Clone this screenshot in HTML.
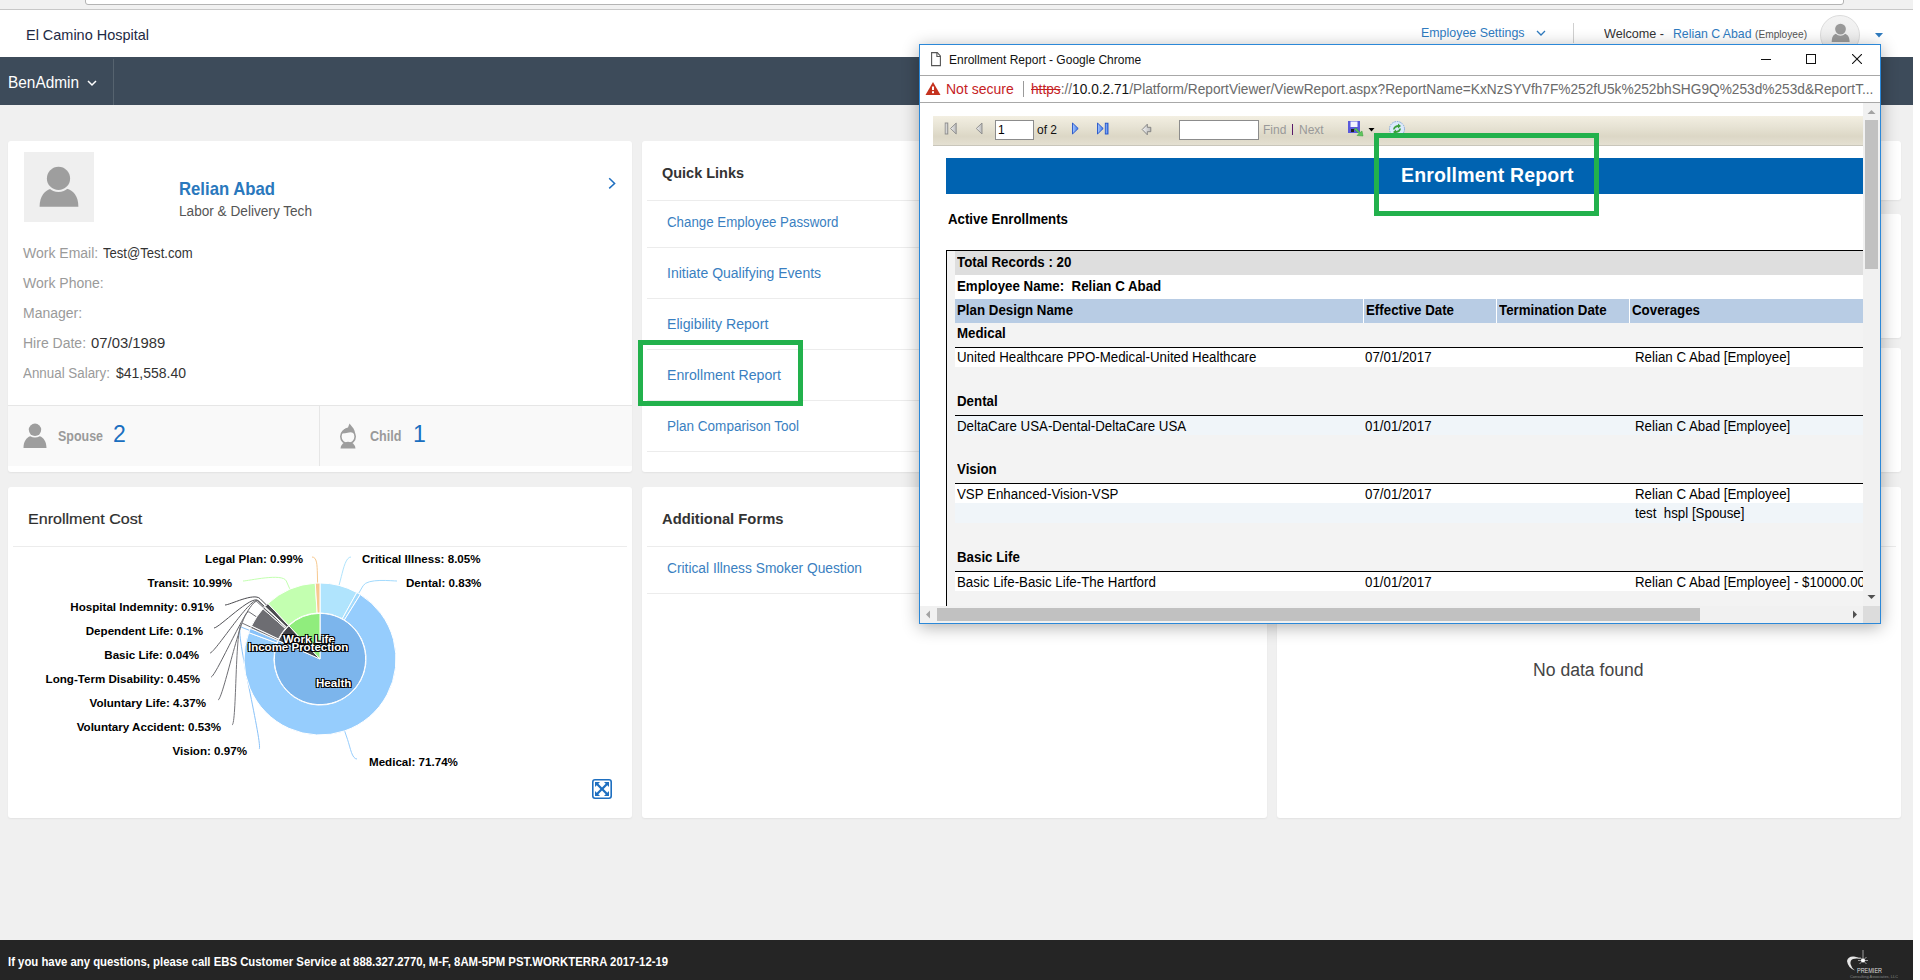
<!DOCTYPE html>
<html><head><meta charset="utf-8">
<style>
*{margin:0;padding:0;box-sizing:border-box}
html,body{width:1920px;height:980px;overflow:hidden;background:#fff;font-family:"Liberation Sans",sans-serif}
.a{position:absolute}
.t{position:absolute;white-space:nowrap;line-height:1}
</style></head><body>
<div class="a" style="left:0px;top:0px;width:1913px;height:980px;background:#f0f0f0;"></div>
<div class="a" style="left:0px;top:0px;width:1913px;height:9px;background:#f1f1f1;"></div>
<div class="a" style="left:85px;top:-10px;width:1759px;height:15px;background:#fff;border:1px solid #b4b4b4;border-radius:3px;"></div>
<div class="a" style="left:0px;top:9px;width:1913px;height:1px;background:#c8c8c8;"></div>
<div class="a" style="left:0px;top:10px;width:1913px;height:47px;background:#fff;"></div>
<div class="t" style="left:26px;top:27.25px;font-size:15px;color:#1e2a44;transform:scaleX(0.964);transform-origin:0 0;">El Camino Hospital</div>
<div class="t" style="left:1421px;top:25.95px;font-size:13px;color:#2f7bbf;transform:scaleX(0.955);transform-origin:0 0;">Employee Settings</div>
<svg class="a" style="left:1536px;top:30px;" width="10" height="7" viewBox="0 0 10 7"><path d="M1 1L5 5L9 1" fill="none" stroke="#2f7bbf" stroke-width="1.3"/></svg>
<div class="a" style="left:1573px;top:23px;width:1px;height:20px;background:#d0d0d0;"></div>
<div class="t" style="left:1604px;top:26.95px;font-size:13px;color:#333;transform:scaleX(0.97);transform-origin:0 0;">Welcome -</div>
<div class="t" style="left:1673px;top:26.95px;font-size:13px;color:#2f7bbf;transform:scaleX(0.945);transform-origin:0 0;">Relian C Abad</div>
<div class="t" style="left:1755px;top:28.65px;font-size:11px;color:#555;transform:scaleX(0.925);transform-origin:0 0;">(Employee)</div>
<div class="a" style="left:1820px;top:15px;width:40px;height:40px;border-radius:50%;background:linear-gradient(#f3f3f3,#ebebeb);border:1px solid #dcdcdc;overflow:hidden"><svg width="40" height="40" viewBox="0 0 40 40" style="position:absolute;left:-1px;top:-1px"><path d="M11.7 27C11.7 22 13.5 19.5 16 18.8H25C27.5 19.5 29.6 22 29.6 27z" fill="#999"/><circle cx="20.5" cy="14.1" r="6.6" fill="#efefef"/><circle cx="20.5" cy="14.1" r="5.4" fill="#999"/></svg></div>
<svg class="a" style="left:1874px;top:32px;" width="10" height="6" viewBox="0 0 10 6"><path d="M1 1L9 1L5 5.5z" fill="#2f7bbf"/></svg>
<div class="a" style="left:0px;top:57px;width:1913px;height:48px;background:#3d4b5a;"></div>
<div class="t" style="left:8px;top:74.90px;font-size:16px;color:#fff;transform:scaleX(0.962);transform-origin:0 0;">BenAdmin</div>
<svg class="a" style="left:87px;top:80px;" width="10" height="7" viewBox="0 0 10 7"><path d="M1 1L5 5L9 1" fill="none" stroke="#fff" stroke-width="1.5"/></svg>
<div class="a" style="left:113px;top:59px;width:1px;height:46px;background:#56636f;"></div>
<div class="a" style="left:8px;top:141px;width:624px;height:331px;background:#fff;border-radius:3px;box-shadow:0 1px 2px rgba(0,0,0,.06);"></div>
<div class="a" style="left:642px;top:141px;width:625px;height:331px;background:#fff;border-radius:3px;box-shadow:0 1px 2px rgba(0,0,0,.06);"></div>
<div class="a" style="left:1277px;top:141px;width:624px;height:59px;background:#fff;border-radius:3px;box-shadow:0 1px 2px rgba(0,0,0,.06);"></div>
<div class="a" style="left:1277px;top:214px;width:624px;height:124px;background:#fff;border-radius:3px;box-shadow:0 1px 2px rgba(0,0,0,.06);"></div>
<div class="a" style="left:1277px;top:348px;width:624px;height:124px;background:#fff;border-radius:3px;box-shadow:0 1px 2px rgba(0,0,0,.06);"></div>
<div class="a" style="left:8px;top:487px;width:624px;height:331px;background:#fff;border-radius:3px;box-shadow:0 1px 2px rgba(0,0,0,.06);"></div>
<div class="a" style="left:642px;top:487px;width:625px;height:331px;background:#fff;border-radius:3px;box-shadow:0 1px 2px rgba(0,0,0,.06);"></div>
<div class="a" style="left:1277px;top:487px;width:624px;height:331px;background:#fff;border-radius:3px;box-shadow:0 1px 2px rgba(0,0,0,.06);"></div>
<div class="a" style="left:0px;top:940px;width:1913px;height:40px;background:#252525;"></div>
<div class="t" style="left:8px;top:955.80px;font-size:12px;font-weight:bold;color:#fff;transform:scaleX(0.946);transform-origin:0 0;">If you have any questions, please call EBS Customer Service at 888.327.2770, M-F, 8AM-5PM PST.WORKTERRA 2017-12-19</div>
<svg class="a" style="left:1844px;top:947px;" width="54" height="33" viewBox="0 0 54 33"><path d="M3 14Q4 9 10 9.5Q14 10 19 12.5Q13 11 9 12Q6 13 6.5 17Q7.5 21 11 23.5Q4 21 3 14z" fill="#e6e6e6"/><path d="M19 3V14M14 13.5H24M15.5 10L22.5 17M22.5 10L15.5 17" stroke="#bbb" stroke-width="0.8"/><circle cx="19" cy="13.5" r="2" fill="#fff"/><text x="13" y="26" font-family="Liberation Sans" font-size="8" fill="#ddd" textLength="25" lengthAdjust="spacingAndGlyphs">PREMIER</text><text x="6" y="31" font-family="Liberation Sans" font-size="4" fill="#888" textLength="48" lengthAdjust="spacingAndGlyphs">Consulting Associates, LLC</text></svg>
<div class="a" style="left:24px;top:152px;width:70px;height:70px;background:#efefef;"></div>
<svg class="a" style="left:24px;top:152px;" width="70" height="70" viewBox="0 0 70 70"><path d="M15.6 54.8C15.6 44 21 38.5 27 36.8H43C49 38.5 54.4 44 54.4 54.8z" fill="#9e9e9e"/><circle cx="34.5" cy="26.4" r="13.6" fill="#efefef"/><circle cx="34.5" cy="26.4" r="11.6" fill="#9e9e9e"/></svg>
<div class="t" style="left:179px;top:178.85px;font-size:19px;font-weight:bold;color:#2a78bd;transform:scaleX(0.88);transform-origin:0 0;">Relian Abad</div>
<div class="t" style="left:179px;top:204.10px;font-size:14px;color:#555;transform:scaleX(0.973);transform-origin:0 0;">Labor &amp; Delivery Tech</div>
<svg class="a" style="left:606px;top:176px;" width="12" height="15" viewBox="0 0 12 15"><path d="M3.2 2.3L8.6 7.5L3.2 12.4" fill="none" stroke="#1e6fc0" stroke-width="1.5"/></svg>
<div class="t" style="left:23px;top:246.10px;font-size:14px;color:#9a9a9a;">Work Email:</div>
<div class="t" style="left:103px;top:246.10px;font-size:14px;color:#333;transform:scaleX(0.935);transform-origin:0 0;">Test@Test.com</div>
<div class="t" style="left:23px;top:276.10px;font-size:14px;color:#9a9a9a;">Work Phone:</div>
<div class="t" style="left:23px;top:306.10px;font-size:14px;color:#9a9a9a;">Manager:</div>
<div class="t" style="left:23px;top:336.10px;font-size:14px;color:#9a9a9a;">Hire Date:</div>
<div class="t" style="left:91px;top:336.10px;font-size:14px;color:#333;transform:scaleX(1.06);transform-origin:0 0;">07/03/1989</div>
<div class="t" style="left:23px;top:366.10px;font-size:14px;color:#9a9a9a;transform:scaleX(0.955);transform-origin:0 0;">Annual Salary:</div>
<div class="t" style="left:116px;top:366.10px;font-size:14px;color:#333;">$41,558.40</div>
<div class="a" style="left:8px;top:405px;width:624px;height:1px;background:#e6e6e6;"></div>
<div class="a" style="left:8px;top:406px;width:624px;height:60px;background:#f9f9f9;"></div>
<div class="a" style="left:319px;top:406px;width:1px;height:60px;background:#e6e6e6;"></div>
<svg class="a" style="left:22px;top:422px;" width="28" height="28" viewBox="0 0 28 28"><circle cx="13" cy="7.8" r="6.2" fill="#9e9e9e"/><path d="M1.5 26C1.5 19.5 4.5 15.6 8.2 14.3Q13 16.8 17.8 14.3C21.5 15.6 24.5 19.5 24.5 26z" fill="#9e9e9e"/></svg>
<div class="t" style="left:58px;top:429.10px;font-size:14px;font-weight:bold;color:#9a9a9a;transform:scaleX(0.89);transform-origin:0 0;">Spouse</div>
<div class="t" style="left:113px;top:423.45px;font-size:23px;color:#1a6fc0;">2</div>
<svg class="a" style="left:337px;top:422px;" width="22" height="28" viewBox="0 0 22 28"><circle cx="11" cy="14.5" r="7.2" fill="none" stroke="#9e9e9e" stroke-width="1.6"/><path d="M4.5 11.5Q6 6.5 11 5.5L12.5 1.5L16.5 6.5Q18 8.5 17.8 12Q15 9.5 12 10.5Q8 11.5 4.5 11.5z" fill="#9e9e9e"/><path d="M3.5 26.5Q4.5 20 11 19.8Q17.5 20 18.5 26.5z" fill="#9e9e9e"/></svg>
<div class="t" style="left:370px;top:429.10px;font-size:14px;font-weight:bold;color:#9a9a9a;transform:scaleX(0.9);transform-origin:0 0;">Child</div>
<div class="t" style="left:413px;top:423.45px;font-size:23px;color:#1a6fc0;">1</div>
<div class="t" style="left:662px;top:165.25px;font-size:15px;font-weight:bold;color:#333;transform:scaleX(0.965);transform-origin:0 0;">Quick Links</div>
<div class="a" style="left:647px;top:200px;width:615px;height:1px;background:#ececec;"></div>
<div class="a" style="left:647px;top:247px;width:615px;height:1px;background:#ececec;"></div>
<div class="a" style="left:647px;top:298px;width:615px;height:1px;background:#ececec;"></div>
<div class="a" style="left:647px;top:349px;width:615px;height:1px;background:#ececec;"></div>
<div class="a" style="left:647px;top:400px;width:615px;height:1px;background:#ececec;"></div>
<div class="a" style="left:647px;top:451px;width:615px;height:1px;background:#ececec;"></div>
<div class="t" style="left:667px;top:214.90px;font-size:14px;color:#3a7fc1;transform:scaleX(0.95);transform-origin:0 0;">Change Employee Password</div>
<div class="t" style="left:667px;top:265.90px;font-size:14px;color:#3a7fc1;">Initiate Qualifying Events</div>
<div class="t" style="left:667px;top:316.90px;font-size:14px;color:#3a7fc1;transform:scaleX(1.01);transform-origin:0 0;">Eligibility Report</div>
<div class="t" style="left:667px;top:367.90px;font-size:14px;color:#3a7fc1;transform:scaleX(1.01);transform-origin:0 0;">Enrollment Report</div>
<div class="t" style="left:667px;top:418.90px;font-size:14px;color:#3a7fc1;transform:scaleX(0.966);transform-origin:0 0;">Plan Comparison Tool</div>
<div class="t" style="left:28px;top:511.25px;font-size:15px;color:#2e2e2e;-webkit-text-stroke:0.2px #2e2e2e;transform:scaleX(1.07);transform-origin:0 0;">Enrollment Cost</div>
<div class="a" style="left:13px;top:546px;width:614px;height:1px;background:#ececec;"></div>
<svg class="a" style="left:591px;top:778px;" width="22" height="22" viewBox="0 0 22 22"><rect x="1.8" y="1.8" width="18.4" height="18.4" rx="2.2" fill="none" stroke="#1e6fc0" stroke-width="1.6"/><path d="M4 4H9L7.3 5.7L11 9.4L14.7 5.7L13 4H18V9L16.3 7.3L12.6 11L16.3 14.7L18 13V18H13L14.7 16.3L11 12.6L7.3 16.3L9 18H4V13L5.7 14.7L9.4 11L5.7 7.3L4 9z" fill="#1e6fc0"/></svg>
<div class="t" style="left:662px;top:511.25px;font-size:15px;font-weight:bold;color:#333;transform:scaleX(0.985);transform-origin:0 0;">Additional Forms</div>
<div class="a" style="left:647px;top:546px;width:615px;height:1px;background:#ececec;"></div>
<div class="t" style="left:667px;top:561.10px;font-size:14px;color:#3a7fc1;transform:scaleX(0.983);transform-origin:0 0;">Critical Illness Smoker Question</div>
<div class="a" style="left:647px;top:593px;width:615px;height:1px;background:#ececec;"></div>
<div class="a" style="left:1282px;top:546px;width:614px;height:1px;background:#ececec;"></div>
<div class="t" style="left:1533px;top:660.70px;font-size:18px;color:#444;transform:scaleX(0.978);transform-origin:0 0;">No data found</div>
<div class="a" style="left:638px;top:340px;width:165px;height:66px;background:transparent;border:5px solid #22b14c;"></div>
<svg class="a" style="left:0;top:0" width="640" height="830" viewBox="0 0 640 830"><path d="M312.0 557.0C317.0 557.0 317.1 565.0 317.4 574.0L317.6 583.0" fill="none" stroke="#f7c98f" stroke-width="1"/><path d="M243.0 581.0C248.0 581.0 282.7 572.7 286.3 581.0L289.9 589.2" fill="none" stroke="#c3ffb0" stroke-width="1"/><path d="M351.0 557.0C346.0 557.0 343.5 568.0 341.3 576.7L339.0 585.4" fill="none" stroke="#b0e4fd" stroke-width="1"/><path d="M397.0 581.0C392.0 581.0 367.7 578.0 363.1 585.7L358.6 593.5" fill="none" stroke="#a2dafd" stroke-width="1"/><path d="M357.0 759.0C352.0 759.0 350.4 748.0 347.5 739.4L344.6 730.9" fill="none" stroke="#96cdfd" stroke-width="1"/><path d="M259.0 749.0C264.0 749.0 232.9 623.7 241.2 627.1L249.6 630.4" fill="none" stroke="#89c2f9" stroke-width="1"/><path d="M225.0 605.0C230.0 605.0 253.8 592.3 260.1 598.7L266.5 605.1" fill="none" stroke="#4b4b50" stroke-width="1"/><path d="M214.0 628.0C219.0 628.0 251.7 594.4 258.2 600.6L264.8 606.8" fill="none" stroke="#545459" stroke-width="1"/><path d="M210.0 653.0C215.0 653.0 251.4 594.7 258.0 600.9L264.6 607.0" fill="none" stroke="#5c5c61" stroke-width="1"/><path d="M211.0 677.0C216.0 677.0 250.4 595.8 257.1 601.8L263.8 607.9" fill="none" stroke="#65656a" stroke-width="1"/><path d="M218.0 700.0C223.0 700.0 241.7 607.0 249.2 612.0L256.7 617.0" fill="none" stroke="#6d6d72" stroke-width="1"/><path d="M232.0 725.0C237.0 725.0 234.6 619.6 242.8 623.4L251.0 627.2" fill="none" stroke="#76767b" stroke-width="1"/><path d="M320.00 583.00A76.0 76.0 0 0 1 356.83 592.52L342.34 618.68A46.1 46.1 0 0 0 320.00 612.90Z" fill="#b0e4fd" stroke="#fff" stroke-width="1" stroke-linejoin="round"/><path d="M356.83 592.52A76.0 76.0 0 0 1 360.25 594.53L344.41 619.90A46.1 46.1 0 0 0 342.34 618.68Z" fill="#a2dafd" stroke="#fff" stroke-width="1" stroke-linejoin="round"/><path d="M360.25 594.53A76.0 76.0 0 1 1 248.73 632.61L276.77 642.99A46.1 46.1 0 1 0 344.41 619.90Z" fill="#96cdfd" stroke="#fff" stroke-width="1" stroke-linejoin="round"/><path d="M248.73 632.61A76.0 76.0 0 0 1 250.47 628.32L277.82 640.39A46.1 46.1 0 0 0 276.77 642.99Z" fill="#89c2f9" stroke="#fff" stroke-width="1" stroke-linejoin="round"/><path d="M250.47 628.32A76.0 76.0 0 0 1 251.53 626.02L278.47 638.99A46.1 46.1 0 0 0 277.82 640.39Z" fill="#76767b" stroke="#fff" stroke-width="1" stroke-linejoin="round"/><path d="M251.53 626.02A76.0 76.0 0 0 1 263.04 608.68L285.45 628.48A46.1 46.1 0 0 0 278.47 638.99Z" fill="#6d6d72" stroke="#fff" stroke-width="1" stroke-linejoin="round"/><path d="M263.04 608.68A76.0 76.0 0 0 1 264.49 607.09L286.33 627.51A46.1 46.1 0 0 0 285.45 628.48Z" fill="#65656a" stroke="#fff" stroke-width="1" stroke-linejoin="round"/><path d="M264.49 607.09A76.0 76.0 0 0 1 264.62 606.95L286.41 627.43A46.1 46.1 0 0 0 286.33 627.51Z" fill="#5c5c61" stroke="#fff" stroke-width="1" stroke-linejoin="round"/><path d="M264.62 606.95A76.0 76.0 0 0 1 264.95 606.61L286.61 627.22A46.1 46.1 0 0 0 286.41 627.43Z" fill="#545459" stroke="#fff" stroke-width="1" stroke-linejoin="round"/><path d="M264.95 606.61A76.0 76.0 0 0 1 268.03 603.54L288.48 625.36A46.1 46.1 0 0 0 286.61 627.22Z" fill="#4b4b50" stroke="#fff" stroke-width="1" stroke-linejoin="round"/><path d="M268.03 603.54A76.0 76.0 0 0 1 315.27 583.15L317.13 612.99A46.1 46.1 0 0 0 288.48 625.36Z" fill="#c3ffb0" stroke="#fff" stroke-width="1" stroke-linejoin="round"/><path d="M315.27 583.15A76.0 76.0 0 0 1 320.00 583.00L320.00 612.90A46.1 46.1 0 0 0 317.13 612.99Z" fill="#f7c98f" stroke="#fff" stroke-width="1" stroke-linejoin="round"/><path d="M320.00 659.00L320.00 613.40A45.6 45.6 0 1 1 278.28 640.59Z" fill="#7cb5ec" stroke="#fff" stroke-width="1" stroke-linejoin="round"/><path d="M320.00 659.00L278.28 640.59A45.6 45.6 0 0 1 288.82 625.73Z" fill="#434348" stroke="#fff" stroke-width="1" stroke-linejoin="round"/><path d="M320.00 659.00L288.82 625.73A45.6 45.6 0 0 1 320.00 613.40Z" fill="#90ed7d" stroke="#fff" stroke-width="1" stroke-linejoin="round"/></svg>
<div class="t" style="right:1617px;top:553.14px;font-size:11.6px;font-weight:bold;color:#000">Legal Plan: 0.99%</div>
<div class="t" style="right:1688px;top:577.14px;font-size:11.6px;font-weight:bold;color:#000">Transit: 10.99%</div>
<div class="t" style="right:1706px;top:601.14px;font-size:11.6px;font-weight:bold;color:#000">Hospital Indemnity: 0.91%</div>
<div class="t" style="right:1717px;top:625.14px;font-size:11.6px;font-weight:bold;color:#000">Dependent Life: 0.1%</div>
<div class="t" style="right:1721px;top:649.14px;font-size:11.6px;font-weight:bold;color:#000">Basic Life: 0.04%</div>
<div class="t" style="right:1720px;top:673.14px;font-size:11.6px;font-weight:bold;color:#000">Long-Term Disability: 0.45%</div>
<div class="t" style="right:1714px;top:697.14px;font-size:11.6px;font-weight:bold;color:#000">Voluntary Life: 4.37%</div>
<div class="t" style="right:1699px;top:721.14px;font-size:11.6px;font-weight:bold;color:#000">Voluntary Accident: 0.53%</div>
<div class="t" style="right:1673px;top:745.14px;font-size:11.6px;font-weight:bold;color:#000">Vision: 0.97%</div>
<div class="t" style="left:362px;top:553.14px;font-size:11.6px;font-weight:bold;color:#000;">Critical Illness: 8.05%</div>
<div class="t" style="left:406px;top:577.14px;font-size:11.6px;font-weight:bold;color:#000;">Dental: 0.83%</div>
<div class="t" style="left:369px;top:756.14px;font-size:11.6px;font-weight:bold;color:#000;">Medical: 71.74%</div>
<div class="t" style="left:283px;top:633.61px;font-size:11.4px;font-weight:bold;color:#fff;text-shadow:0 0 1px #000,0 0 1px #000,1px 1px 0 #000,-1px -1px 0 #000,1px -1px 0 #000,-1px 1px 0 #000;">Work Life</div>
<div class="t" style="left:248px;top:641.52px;font-size:11.5px;font-weight:bold;color:#fff;text-shadow:0 0 1px #000,0 0 1px #000,1px 1px 0 #000,-1px -1px 0 #000,1px -1px 0 #000,-1px 1px 0 #000;">Income Protection</div>
<div class="t" style="left:316px;top:677.14px;font-size:11.6px;font-weight:bold;color:#fff;text-shadow:0 0 1px #000,0 0 1px #000,1px 1px 0 #000,-1px -1px 0 #000,1px -1px 0 #000,-1px 1px 0 #000;">Health</div>
<div class="a" style="left:919px;top:44px;width:962px;height:580px;background:#fff;box-shadow:0 3px 16px rgba(0,0,0,.32);"></div>
<div class="a" style="left:919px;top:44px;width:962px;height:580px;background:#fff;border:1px solid #2b88d8;"></div>
<div class="a" style="left:920px;top:75px;width:960px;height:1px;background:#a8a8a8;"></div>
<svg class="a" style="left:930px;top:51px;" width="12" height="16" viewBox="0 0 12 16"><path d="M1.6 1.6H7.3L10.4 4.9V14.6H1.6z" fill="#fff" stroke="#555" stroke-width="1.1"/><path d="M6.9 1.6V5.5H10.4" fill="none" stroke="#555" stroke-width="1.1"/></svg>
<div class="t" style="left:949px;top:53.80px;font-size:12px;color:#111;">Enrollment Report - Google Chrome</div>
<div class="a" style="left:1761px;top:59px;width:10px;height:1px;background:#111;"></div>
<div class="a" style="left:1806px;top:54px;width:10px;height:10px;background:transparent;border:1px solid #111;"></div>
<svg class="a" style="left:1852px;top:54px;" width="10" height="10" viewBox="0 0 10 10"><path d="M0 0L10 10M10 0L0 10" stroke="#111" stroke-width="1.1"/></svg>
<div class="a" style="left:920px;top:102px;width:960px;height:1px;background:#a8a8a8;"></div>
<svg class="a" style="left:925px;top:82px;" width="16" height="13" viewBox="0 0 16 13"><path d="M8 0L15.5 13H0.5z" fill="#c5321f"/><rect x="7" y="4.5" width="2" height="3.5" fill="#fff"/><rect x="7" y="9.2" width="2" height="2" fill="#fff"/></svg>
<div class="t" style="left:946px;top:82.10px;font-size:14px;color:#c5221f;">Not secure</div>
<div class="a" style="left:1023px;top:81px;width:1px;height:16px;background:#9a9a9a;"></div>
<div class="t" style="left:1031px;top:82.10px;font-size:14px;color:#6a6a6a;transform:scaleX(0.978);transform-origin:0 0;"><span style="color:#c5221f;text-decoration:line-through">https</span>://<span style="color:#111">10.0.2.71</span>/Platform/ReportViewer/ViewReport.aspx?ReportName=KxNzSYVfh7F%252fU5k%252bhSHG9Q%253d%253d&amp;ReportT...</div>
<div class="a" style="left:0;top:0;width:1920px;height:980px;clip-path:inset(103px 57px 374px 920px)">
<div class="a" style="left:933px;top:116px;width:930px;height:30px;background:linear-gradient(#f3efe2 0%,#e6e2d3 40%,#dcd7c6 70%,#e4e0d2 100%);border-bottom:1px solid #c9c6bb;"></div>
<svg class="a" style="left:944px;top:122px;" width="14" height="13" viewBox="0 0 14 13"><defs><linearGradient id="gg" x1="0" x2="1"><stop offset="0" stop-color="#f2f2f2"/><stop offset="1" stop-color="#b9b9b9"/></linearGradient></defs><rect x="1.2" y="1" width="2.6" height="11" fill="url(#gg)" stroke="#8a8a8a" stroke-width="0.9"/><path d="M12.2 1L6.5 6.5L12.2 12z" fill="url(#gg)" stroke="#8a8a8a" stroke-width="0.9"/></svg>
<svg class="a" style="left:974px;top:122px;" width="9" height="13" viewBox="0 0 9 13"><path d="M8 1L2.3 6.5L8 12z" fill="url(#gg)" stroke="#8a8a8a" stroke-width="0.9"/></svg>
<div class="a" style="left:995px;top:120px;width:39px;height:20px;background:#fff;border:1px solid #8c8c8c;"></div>
<div class="t" style="left:998px;top:123.80px;font-size:12px;color:#000;">1</div>
<div class="t" style="left:1037px;top:123.80px;font-size:12px;color:#111;">of 2</div>
<svg class="a" style="left:1071px;top:122px;" width="9" height="13" viewBox="0 0 9 13"><defs><linearGradient id="bg2" x1="0" x2="1"><stop offset="0" stop-color="#a9c8fb"/><stop offset="1" stop-color="#3e78ea"/></linearGradient></defs><path d="M1.5 1L7.2 6.5L1.5 12z" fill="url(#bg2)" stroke="#1f50c8" stroke-width="0.9"/></svg>
<svg class="a" style="left:1096px;top:122px;" width="14" height="13" viewBox="0 0 14 13"><path d="M1.5 1L7.2 6.5L1.5 12z" fill="url(#bg2)" stroke="#1f50c8" stroke-width="0.9"/><rect x="9.3" y="1.2" width="2.7" height="10.8" fill="url(#bg2)" stroke="#1f50c8" stroke-width="0.9"/></svg>
<svg class="a" style="left:1141px;top:123px;" width="11" height="13" viewBox="0 0 11 13"><path d="M1.2 6.5L6.3 1.2V4.3H9.8V8.7H6.3V11.8z" fill="url(#gg)" stroke="#7e7e7e" stroke-width="0.9"/></svg>
<div class="a" style="left:1179px;top:120px;width:80px;height:20px;background:#fff;border:1px solid #8c8c8c;"></div>
<div class="t" style="left:1263px;top:123.80px;font-size:12px;color:#999;">Find</div>
<div class="a" style="left:1292px;top:124px;width:1px;height:11px;background:#5a1a6a;"></div>
<div class="t" style="left:1299px;top:123.80px;font-size:12px;color:#999;">Next</div>
<svg class="a" style="left:1347px;top:120px;" width="18" height="18" viewBox="0 0 18 18"><rect x="1" y="1" width="12" height="12" fill="#5a5adc"/><rect x="3.5" y="1.5" width="7" height="5.5" fill="#f4f4ff"/><rect x="4" y="9" width="3" height="3" fill="#222"/><path d="M7 9L12 13.5L10 15.5L16 16L15 11L13 12.5L9 8z" fill="#5cc65c" stroke="#3a9a3a" stroke-width="0.5"/></svg>
<svg class="a" style="left:1368px;top:127px;" width="7" height="5" viewBox="0 0 7 5"><path d="M0.5 1L6.5 1L3.5 4.5z" fill="#000"/></svg>
<svg class="a" style="left:1388px;top:120px;" width="18" height="18" viewBox="0 0 18 18"><circle cx="9" cy="9" r="7.5" fill="#dbe9fb" stroke="#7fa6de" stroke-width="1" stroke-dasharray="1.5 1"/><path d="M5 9.5Q5.5 5.5 10 5L10 3.5L13 6L10 8.5L10 7Q7 7.2 6.5 9.5z" fill="#3aa03a"/><path d="M13 8.5Q12.5 12.5 8 13L8 14.5L5 12L8 9.5L8 11Q11 10.8 11.5 8.5z" fill="#3aa03a"/></svg>
<div class="a" style="left:946px;top:158px;width:917px;height:36px;background:#0063b1;"></div>
<div class="t" style="left:1401px;top:166.43px;font-size:19.5px;font-weight:bold;color:#fff;letter-spacing:0.15px;">Enrollment Report</div>
<div class="t" style="left:948px;top:211.80px;font-size:14px;font-weight:bold;color:#000;transform:scaleX(0.946);transform-origin:0 0;">Active Enrollments</div>
<div class="a" style="left:946px;top:250px;width:917px;height:357px;background:#f3f3f3;"></div>
<div class="a" style="left:946px;top:250px;width:917px;height:1px;background:#000;"></div>
<div class="a" style="left:946px;top:250px;width:1px;height:357px;background:#000;"></div>
<div class="a" style="left:955px;top:251px;width:908px;height:24px;background:#dedede;"></div>
<div class="t" style="left:957px;top:255.10px;font-size:14px;font-weight:bold;color:#000;transform:scaleX(0.95);transform-origin:0 0;">Total Records : 20</div>
<div class="a" style="left:955px;top:275px;width:908px;height:24px;background:#fff;"></div>
<div class="t" style="left:957px;top:279.10px;font-size:14px;font-weight:bold;color:#000;transform:scaleX(0.95);transform-origin:0 0;">Employee Name:&nbsp; Relian C Abad</div>
<div class="a" style="left:955px;top:299px;width:908px;height:24px;background:#b8cce4;"></div>
<div class="a" style="left:1363px;top:299px;width:1px;height:24px;background:#fff;"></div>
<div class="a" style="left:1496px;top:299px;width:1px;height:24px;background:#fff;"></div>
<div class="a" style="left:1629px;top:299px;width:1px;height:24px;background:#fff;"></div>
<div class="t" style="left:957px;top:303.10px;font-size:14px;font-weight:bold;color:#000;transform:scaleX(0.95);transform-origin:0 0;">Plan Design Name</div>
<div class="t" style="left:1366px;top:303.10px;font-size:14px;font-weight:bold;color:#000;transform:scaleX(0.95);transform-origin:0 0;">Effective Date</div>
<div class="t" style="left:1499px;top:303.10px;font-size:14px;font-weight:bold;color:#000;transform:scaleX(0.95);transform-origin:0 0;">Termination Date</div>
<div class="t" style="left:1632px;top:303.10px;font-size:14px;font-weight:bold;color:#000;transform:scaleX(0.95);transform-origin:0 0;">Coverages</div>
<div class="t" style="left:957px;top:326.10px;font-size:14px;font-weight:bold;color:#000;transform:scaleX(0.95);transform-origin:0 0;">Medical</div>
<div class="a" style="left:955px;top:347px;width:908px;height:1px;background:#000;"></div>
<div class="a" style="left:955px;top:348px;width:908px;height:19px;background:#fff;"></div>
<div class="t" style="left:957px;top:350.10px;font-size:14px;color:#000;transform:scaleX(0.95);transform-origin:0 0;">United Healthcare PPO-Medical-United Healthcare</div>
<div class="t" style="left:1365px;top:350.10px;font-size:14px;color:#000;transform:scaleX(0.95);transform-origin:0 0;">07/01/2017</div>
<div class="t" style="left:1635px;top:350.10px;font-size:14px;color:#000;transform:scaleX(0.95);transform-origin:0 0;">Relian C Abad [Employee]</div>
<div class="t" style="left:957px;top:394.10px;font-size:14px;font-weight:bold;color:#000;transform:scaleX(0.95);transform-origin:0 0;">Dental</div>
<div class="a" style="left:955px;top:415px;width:908px;height:1px;background:#000;"></div>
<div class="a" style="left:955px;top:416px;width:908px;height:19px;background:#f0f5f9;"></div>
<div class="t" style="left:957px;top:419.10px;font-size:14px;color:#000;transform:scaleX(0.95);transform-origin:0 0;">DeltaCare USA-Dental-DeltaCare USA</div>
<div class="t" style="left:1365px;top:419.10px;font-size:14px;color:#000;transform:scaleX(0.95);transform-origin:0 0;">01/01/2017</div>
<div class="t" style="left:1635px;top:419.10px;font-size:14px;color:#000;transform:scaleX(0.95);transform-origin:0 0;">Relian C Abad [Employee]</div>
<div class="t" style="left:957px;top:462.10px;font-size:14px;font-weight:bold;color:#000;transform:scaleX(0.95);transform-origin:0 0;">Vision</div>
<div class="a" style="left:955px;top:483px;width:908px;height:1px;background:#000;"></div>
<div class="a" style="left:955px;top:484px;width:908px;height:19px;background:#fff;"></div>
<div class="a" style="left:955px;top:503px;width:908px;height:20px;background:#f0f5f9;"></div>
<div class="t" style="left:957px;top:487.10px;font-size:14px;color:#000;transform:scaleX(0.95);transform-origin:0 0;">VSP Enhanced-Vision-VSP</div>
<div class="t" style="left:1365px;top:487.10px;font-size:14px;color:#000;transform:scaleX(0.95);transform-origin:0 0;">07/01/2017</div>
<div class="t" style="left:1635px;top:487.10px;font-size:14px;color:#000;transform:scaleX(0.95);transform-origin:0 0;">Relian C Abad [Employee]</div>
<div class="t" style="left:1635px;top:506.10px;font-size:14px;color:#000;transform:scaleX(0.95);transform-origin:0 0;">test&nbsp; hspl [Spouse]</div>
<div class="t" style="left:957px;top:550.10px;font-size:14px;font-weight:bold;color:#000;transform:scaleX(0.95);transform-origin:0 0;">Basic Life</div>
<div class="a" style="left:955px;top:571px;width:908px;height:1px;background:#000;"></div>
<div class="a" style="left:955px;top:572px;width:908px;height:19px;background:#fff;"></div>
<div class="t" style="left:957px;top:575.10px;font-size:14px;color:#000;transform:scaleX(0.95);transform-origin:0 0;">Basic Life-Basic Life-The Hartford</div>
<div class="t" style="left:1365px;top:575.10px;font-size:14px;color:#000;transform:scaleX(0.95);transform-origin:0 0;">01/01/2017</div>
<div class="t" style="left:1635px;top:575.10px;font-size:14px;color:#000;transform:scaleX(0.95);transform-origin:0 0;">Relian C Abad [Employee] - $10000.00</div>
</div>
<div class="a" style="left:1863px;top:103px;width:17px;height:503px;background:#f1f1f1;"></div>
<div class="a" style="left:1865px;top:120px;width:13px;height:149px;background:#c1c1c1;"></div>
<div class="a" style="left:920px;top:606px;width:943px;height:17px;background:#f1f1f1;"></div>
<div class="a" style="left:937px;top:608px;width:763px;height:13px;background:#c1c1c1;"></div>
<div class="a" style="left:1863px;top:606px;width:17px;height:17px;background:#dcdcdc;"></div>
<svg class="a" style="left:1867px;top:109px;" width="9" height="6" viewBox="0 0 9 6"><path d="M0.5 5L4.5 1L8.5 5z" fill="#a3a3a3"/></svg>
<svg class="a" style="left:1867px;top:594px;" width="9" height="6" viewBox="0 0 9 6"><path d="M0.5 1L4.5 5L8.5 1z" fill="#505050"/></svg>
<svg class="a" style="left:925px;top:610px;" width="6" height="9" viewBox="0 0 6 9"><path d="M5 0.5L1 4.5L5 8.5z" fill="#a3a3a3"/></svg>
<svg class="a" style="left:1852px;top:610px;" width="6" height="9" viewBox="0 0 6 9"><path d="M1 0.5L5 4.5L1 8.5z" fill="#505050"/></svg>
<div class="a" style="left:1374px;top:133px;width:225px;height:83px;background:transparent;border:5px solid #22b14c;"></div>
</body></html>
